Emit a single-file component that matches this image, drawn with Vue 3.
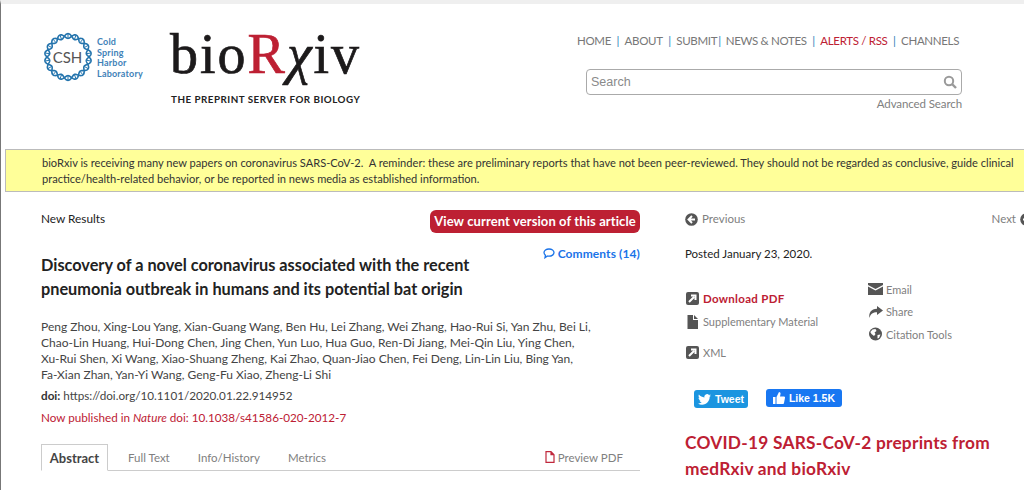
<script setup>
const nav = [
  { t: 'HOME', s: '|' }, { t: 'ABOUT', s: '|' }, { t: 'SUBMIT', s: '|', tight: true },
  { t: 'NEWS & NOTES', s: '|' }, { t: 'ALERTS / RSS', s: '|', red: true }, { t: 'CHANNELS' }
]
const authors = [
  'Peng Zhou, Xing-Lou Yang, Xian-Guang Wang, Ben Hu, Lei Zhang, Wei Zhang, Hao-Rui Si, Yan Zhu, Bei Li,',
  'Chao-Lin Huang, Hui-Dong Chen, Jing Chen, Yun Luo, Hua Guo, Ren-Di Jiang, Mei-Qin Liu, Ying Chen,',
  'Xu-Rui Shen, Xi Wang, Xiao-Shuang Zheng, Kai Zhao, Quan-Jiao Chen, Fei Deng, Lin-Lin Liu, Bing Yan,',
  'Fa-Xian Zhan, Yan-Yi Wang, Geng-Fu Xiao, Zheng-Li Shi'
]
const strand = (phase) => {
  let d = ''
  for (let i = 0; i <= 240; i++) {
    const a = (i / 240) * Math.PI * 2
    const r = 21 + 2.4 * Math.sin(a * 9 + phase)
    d += `${i ? 'L' : 'M'}${(25 + r * Math.cos(a)).toFixed(2)} ${(25 + r * Math.sin(a)).toFixed(2)}`
  }
  return d + 'Z'
}
const strandA = strand(0)
const strandB = strand(Math.PI)
const rungs = (() => {
  let d = ''
  for (let i = 0; i < 18; i++) {
    const a = ((i + 0.5) / 18) * Math.PI * 2
    const c = Math.cos(a)
    const s = Math.sin(a)
    d += `M${(25 + 18.8 * c).toFixed(2)} ${(25 + 18.8 * s).toFixed(2)}L${(25 + 23.2 * c).toFixed(2)} ${(25 + 23.2 * s).toFixed(2)}`
  }
  return d
})()
</script>

<template>
  <div class="page">
    <header class="head">
      <div class="csh">
        <svg class="csh-mark" width="50" height="50" viewBox="0 0 50 50" aria-hidden="true">
          <path :d="strandA" fill="none" stroke="#2474ad" stroke-width="1.600" />
          <path :d="strandB" fill="none" stroke="#2474ad" stroke-width="1.600" />
          <path :d="rungs" fill="none" stroke="#2474ad" stroke-width="1" />
          <text x="24.500" y="30.500" text-anchor="middle" class="csh-letters">CSH</text>
        </svg>
        <div class="csh-name">Cold<br />Spring<br />Harbor<br />Laboratory</div>
      </div>
      <div class="brand">
        <div class="brand-word">bio<span class="r">R</span><span class="chi">χ</span>iv</div>
        <div class="brand-tag">THE PREPRINT SERVER FOR BIOLOGY</div>
      </div>
      <div class="tools">
        <nav class="nav">
          <template v-for="n in nav" :key="n.t">
            <a :class="{ red: n.red }">{{ n.t }}</a>
            <i v-if="n.s" class="sep" :class="{ tight: n.tight }">{{ n.s }}</i>
          </template>
        </nav>
        <div class="search">
          <span>Search</span>
          <svg width="14" height="14" viewBox="0 0 14 14" aria-hidden="true">
            <circle cx="6" cy="6" r="4.200" fill="none" stroke="#9a9a9a" stroke-width="2" />
            <path d="M9 9l4 4" stroke="#9a9a9a" stroke-width="2.400" />
          </svg>
        </div>
        <a class="advanced">Advanced Search</a>
      </div>
    </header>

    <div class="notice">
      bioRxiv is receiving many new papers on coronavirus SARS-CoV-2.&nbsp; A reminder: these are preliminary reports that have not been peer-reviewed. They should not be regarded as conclusive, guide clinical<br />
      practice/health-related behavior, or be reported in news media as established information.
    </div>

    <div class="cols">
      <main class="article">
        <div class="top-row">
          <span class="kind">New Results</span>
          <a class="current">View current version of this article</a>
        </div>
        <a class="comments">
          <svg width="12" height="11" viewBox="0 0 12 11" aria-hidden="true">
            <path d="M6 1c2.800 0 5 1.600 5 3.600S8.800 8.200 6 8.200c-.5 0-1 0-1.500-.2L2 9.700l.5-2.500C1.600 6.600 1 5.700 1 4.600 1 2.600 3.200 1 6 1z" fill="none" stroke="#1a73e8" stroke-width="1.300" />
          </svg>
          Comments (14)
        </a>
        <h1 class="title">Discovery of a novel coronavirus associated with the recent<br />pneumonia outbreak in humans and its potential bat origin</h1>
        <div class="authors">
          <div v-for="a in authors" :key="a">{{ a }}</div>
        </div>
        <div class="doi"><b>doi:</b> https://doi.org/10.1101/2020.01.22.914952</div>
        <div class="published">Now published in <em>Nature</em> doi: 10.1038/s41586-020-2012-7</div>
        <div class="tabs">
          <a class="tab active">Abstract</a>
          <a class="tab">Full Text</a>
          <a class="tab">Info/History</a>
          <a class="tab">Metrics</a>
          <a class="preview">
            <svg width="10" height="12" viewBox="0 0 10 12" aria-hidden="true">
              <path d="M1 .7h5l3 3v7.600H1zM6 .7v3h3" fill="none" stroke="#c0283c" stroke-width="1.200" />
            </svg>
            Preview PDF
          </a>
        </div>
      </main>

      <aside class="side">
        <div class="pager">
          <a class="pg">
            <svg width="13" height="13" viewBox="0 0 13 13" aria-hidden="true">
              <circle cx="6.500" cy="6.500" r="6.300" fill="#555" />
              <path d="M7 3L3.500 6.500 7 10M4 6.500h6" fill="none" stroke="#fff" stroke-width="1.900" />
            </svg>
            Previous
          </a>
          <a class="pg next">
            Next
            <svg width="13" height="13" viewBox="0 0 13 13" aria-hidden="true">
              <circle cx="6.500" cy="6.500" r="6.300" fill="#555" />
              <path d="M6 3l3.500 3.500L6 10M9 6.500H3" fill="none" stroke="#fff" stroke-width="1.900" />
            </svg>
          </a>
        </div>
        <div class="posted">Posted January 23, 2020.</div>
        <div class="links">
          <div class="links-a">
            <a class="lnk pdf">
              <svg class="ic" width="13" height="13" viewBox="0 0 13 13" aria-hidden="true">
                <rect width="13" height="13" rx="2" fill="#555" />
                <path d="M3 10l5-5M5 3.500h4.500V8" fill="none" stroke="#fff" stroke-width="2" />
              </svg>
              Download PDF
            </a>
            <a class="lnk supp">
              <svg class="ic" width="13" height="14" viewBox="0 0 13 14" aria-hidden="true">
                <path d="M1.500 0H7v5h5v9H1.500zM8 0l4 4H8z" fill="#555" />
              </svg>
              Supplementary Material
            </a>
            <a class="lnk xml">
              <svg class="ic" width="13" height="13" viewBox="0 0 13 13" aria-hidden="true">
                <rect width="13" height="13" rx="2" fill="#555" />
                <path d="M3 10l5-5M5 3.500h4.500V8" fill="none" stroke="#fff" stroke-width="2" />
              </svg>
              XML
            </a>
          </div>
          <div class="links-b">
            <a class="lnk">
              <svg class="ic" width="15" height="12" viewBox="0 0 15 12" aria-hidden="true">
                <path d="M0 0h15v2L7.500 6 0 2zM0 3.500L7.500 7.500 15 3.500V12H0z" fill="#555" />
              </svg>
              Email
            </a>
            <a class="lnk">
              <svg class="ic" width="15" height="12" viewBox="0 0 15 12" aria-hidden="true">
                <path d="M9 0l6 4.500L9 9V6.200C5 6.200 2.500 7.500 1.500 12 .5 7 3 3 9 2.800z" fill="#555" />
              </svg>
              Share
            </a>
            <a class="lnk">
              <svg class="ic" width="14" height="14" viewBox="0 0 14 14" aria-hidden="true">
                <circle cx="7" cy="7" r="6.500" fill="#555" />
                <path d="M4 2.500l3-.5 1 2-2 1.500 1 1.500-1.500 2L3 7 1.800 5zM9 8l3-.5-1.500 3.500-1.500.5z" fill="#fff" />
              </svg>
              Citation Tools
            </a>
          </div>
        </div>
        <div class="social">
          <a class="tweet">
            <svg width="13" height="11" viewBox="0 0 24 20" aria-hidden="true">
              <path d="M24 2.400c-.9.400-1.800.7-2.800.8 1-.6 1.800-1.600 2.200-2.700-1 .6-2 1-3.100 1.200A4.900 4.900 0 0 0 11.900 6.200C7.800 6 4.200 4 1.700.9c-1.300 2.200-.7 5.100 1.500 6.600-.8 0-1.600-.2-2.200-.6 0 2.300 1.600 4.400 3.900 4.900-.7.200-1.500.2-2.200.1.600 2 2.400 3.400 4.600 3.400A9.900 9.900 0 0 1 0 17.300 14 14 0 0 0 7.500 19.500c9.100 0 14.300-7.700 14-14.600 1-.7 1.800-1.500 2.500-2.500z" fill="#fff" />
            </svg>
            Tweet
          </a>
          <a class="like">
            <svg width="12" height="12" viewBox="0 0 12 12" aria-hidden="true">
              <path d="M0 5h2.500v7H0zM3.500 5L6 0c1.200 0 1.700 1 1.500 2L7 4.500h4c.8 0 1.100.7 1 1.300L11 11c-.1.600-.6 1-1.200 1H3.500z" fill="#fff" />
            </svg>
            Like 1.5K
          </a>
        </div>
        <h2 class="covid">COVID-19 SARS-CoV-2 preprints from<br />medRxiv and bioRxiv</h2>
      </aside>
    </div>
  </div>
</template>

<style>
html, body { margin: 0; background: #fff; overflow: hidden; }
</style>

<style scoped>
.page {
  box-sizing: border-box;
  width: 1024px;
  height: 490px;
  overflow: hidden;
  border-top: 4px solid #efefef;
  border-left: 1px solid #777;
  font-family: Lato, "Open Sans", sans-serif;
  color: #333;
}
a { text-decoration: none; color: inherit; }

.head { display: flex; height: 145px; }
.csh { display: flex; margin: 28px 0 0 42px; width: 127px; align-items: flex-start; }
.csh-mark { flex: none; }
.csh-letters { font: 15px Lato, sans-serif; fill: #555; }
.csh-name {
  margin: 5px 0 0 4px;
  font: bold 9px/10.500px Lato, sans-serif;
  letter-spacing: .2px;
  color: #3f82b8;
  white-space: nowrap;
}
.brand { width: 207px; margin-top: 20px; }
.brand-word {
  font: 56px/60px "Liberation Serif", serif;
  color: #1c1a1b;
  letter-spacing: 2px;
  -webkit-text-stroke: .7px currentColor;
  white-space: nowrap;
}
.brand-word .r { color: #bd2033; }
.brand-word .chi { font-style: italic; }
.brand-tag {
  margin: 9px 0 0 1px;
  font: bold 9.800px/12px Lato, sans-serif;
  color: #222;
  letter-spacing: .5px;
  white-space: nowrap;
}
.tools { display: flex; flex-direction: column; align-items: flex-end; width: 375px; margin-left: 210px; }
.nav {
  display: flex;
  margin-top: 29px;
  height: 16px;
  align-self: flex-start;
  margin-left: -10px;
  font-size: 11.500px;
  letter-spacing: -.32px;
  line-height: 16px;
  color: #777;
  white-space: nowrap;
}
.nav .red { color: #bd2033; }
.sep { font-style: normal; color: #2a7fb8; margin: 0 5.500px; }
.sep.tight { margin: 0 5px 0 1px; }
.search {
  box-sizing: border-box;
  flex: none;
  width: 376px;
  height: 26px;
  margin-top: 20px;
  padding: 0 4px;
  display: flex;
  align-items: center;
  justify-content: space-between;
  border: 1px solid #aaa;
  border-radius: 4px;
  font: 12.500px "Liberation Sans", sans-serif;
  color: #8a8a8a;
}
.advanced { margin-top: 1px; font-size: 11.500px; letter-spacing: -.1px; line-height: 16px; color: #808080; }

.notice {
  box-sizing: border-box;
  margin-left: 4px;
  width: 1030px;
  height: 43px;
  padding: 5px 0 0 36px;
  background: #ffff99;
  border: 1px solid #bbb;
  font-size: 11.100px;
  line-height: 16px;
  color: #333;
  white-space: nowrap;
}

.cols { display: flex; }
.article { width: 599px; margin-left: 40px; flex: none; }
.top-row { display: flex; justify-content: space-between; align-items: flex-start; margin-top: 18px; height: 24px; }
.kind { margin-top: 1px; font-size: 11.800px; line-height: 16px; color: #222; }
.current {
  box-sizing: border-box;
  width: 210px;
  height: 23px;
  background: #bd2033;
  border-radius: 6px;
  color: #fff;
  font-size: 13px;
  letter-spacing: .1px;
  font-weight: 700;
  line-height: 23px;
  text-align: center;
  white-space: nowrap;
}
.comments {
  display: flex;
  justify-content: flex-end;
  align-items: center;
  gap: 3px;
  margin-top: 11px;
  height: 16px;
  font-size: 12px;
  letter-spacing: .1px;
  font-weight: 700;
  color: #1a73e8;
}
.title {
  margin: -8px 0 0;
  font-size: 16.300px;
  line-height: 24px;
  font-weight: 700;
  color: #222;
  white-space: nowrap;
}
.authors { margin-top: 18px; font-size: 12px; line-height: 16px; color: #444; white-space: nowrap; }
.doi { margin-top: 4px; font-size: 11.700px; line-height: 16px; color: #444; }
.doi b { color: #333; }
.published { margin-top: 6px; font-size: 11.700px; line-height: 16px; color: #bd2033; }
.tabs {
  display: flex;
  align-items: stretch;
  margin-top: 19px;
  height: 26px;
  border-bottom: 1px solid #ccc;
  font-size: 11.500px;
  color: #808080;
}
.tab { margin-right: 28px; line-height: 27px; white-space: nowrap; }
.tab.active {
  box-sizing: border-box;
  width: 67px;
  height: 27px;
  margin-right: 20px;
  text-align: center;
  line-height: 26px;
  border: 1px solid #ccc;
  border-bottom-color: #fff;
  font-size: 13px;
  font-weight: 700;
  color: #444;
  background: #fff;
}
.preview { margin-left: auto; margin-right: 17px; display: flex; align-items: center; gap: 3px; }

.side { flex: none; width: 348px; margin-left: 45px; }
.pager { display: flex; justify-content: space-between; margin-top: 19px; height: 16px; font-size: 11.500px; line-height: 16px; color: #808080; }
.pg { display: flex; align-items: center; gap: 4px; }
.posted { margin-top: 19px; font-size: 11.500px; line-height: 16px; color: #222; }
.links { display: flex; margin-top: 16px; height: 75px; }
.links-a { width: 183px; padding: 9px 0 0; }
.lnk { display: flex; align-items: center; gap: 3px; height: 22.500px; font-size: 11px; color: #808080; white-space: nowrap; }
.ic { flex: none; width: 15px; }
.pdf { color: #bd2033; font-size: 11.500px; font-weight: 700; letter-spacing: .3px; height: 23px; }
.supp { height: 23px; }
.xml { height: 22px; margin-top: 8px; }
.social { display: flex; margin: 36px 0 0 9px; align-items: flex-start; }
.tweet, .like {
  box-sizing: border-box;
  display: flex;
  align-items: center;
  justify-content: center;
  gap: 4px;
  height: 18px;
  border-radius: 3px;
  font: bold 10.500px "Liberation Sans", sans-serif;
  color: #fff;
}
.tweet { width: 54px; margin-top: 1px; background: #1b95e0; }
.like { width: 76px; margin-left: 18px; background: #1877f2; }
.covid {
  margin: 22px 0 0;
  font-size: 17.300px;
  letter-spacing: .25px;
  line-height: 26px;
  font-weight: 700;
  color: #bd2033;
  white-space: nowrap;
}
</style>
